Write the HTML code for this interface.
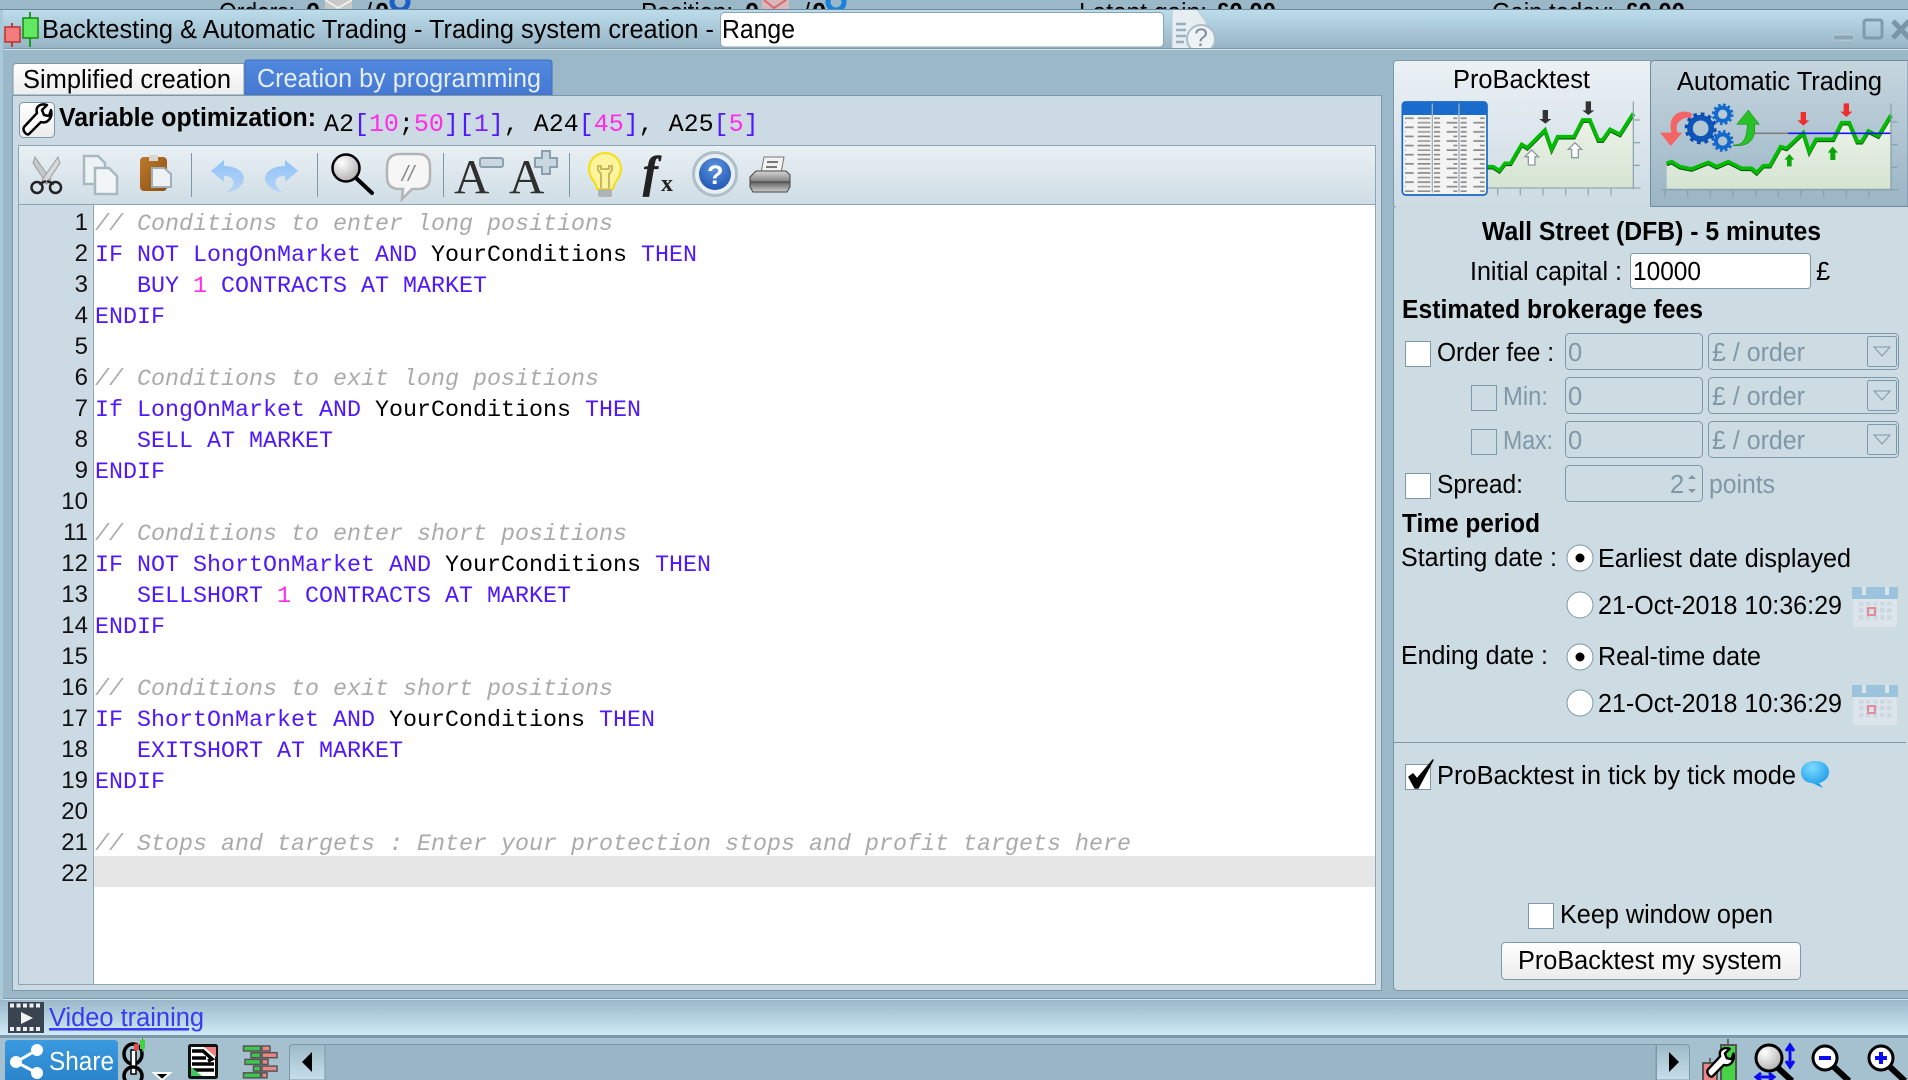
<!DOCTYPE html>
<html lang="en"><head><meta charset="utf-8"><title>Backtesting &amp; Automatic Trading</title>
<style>
html,body{margin:0;padding:0;background:#9ab8c8;width:1908px;height:1080px;overflow:hidden}
svg{display:block}
text{font-family:"Liberation Sans",sans-serif;font-size:25.5px;fill:#000;white-space:pre;transform:translateY(1px)}
.b{font-weight:bold}
.d{fill:#7f98a6}
.m{font-family:"Liberation Mono",monospace;font-size:23.33px}
.c{fill:#aaaaaa;font-style:italic}
.k{fill:#4f18ff}
.n{fill:#ff2be8}
.ln{font-size:24px;text-anchor:end;fill:#111}
</style></head><body>
<svg xmlns="http://www.w3.org/2000/svg" width="1908" height="1080" viewBox="0 0 1908 1080">
<defs>
<linearGradient id="gt" x1="0" y1="0" x2="0" y2="1"><stop offset="0" stop-color="#bcdcec"/><stop offset="1" stop-color="#98b4c4"/></linearGradient>
<linearGradient id="gw" x1="0" y1="0" x2="0" y2="1"><stop offset="0" stop-color="#fff"/><stop offset="1" stop-color="#ececec"/></linearGradient>
<linearGradient id="gb" x1="0" y1="0" x2="0" y2="1"><stop offset="0" stop-color="#5089de"/><stop offset="1" stop-color="#4678d2"/></linearGradient>
<linearGradient id="gtb" x1="0" y1="0" x2="0" y2="1"><stop offset="0" stop-color="#e9f0f4"/><stop offset="1" stop-color="#cfdde5"/></linearGradient>
<linearGradient id="gpb" x1="0" y1="0" x2="0" y2="1"><stop offset="0" stop-color="#ebf1f5"/><stop offset="1" stop-color="#cddbe3"/></linearGradient>
<linearGradient id="gat" x1="0" y1="0" x2="0" y2="1"><stop offset="0" stop-color="#c6d6df"/><stop offset="1" stop-color="#9ab5c5"/></linearGradient>
<linearGradient id="gv" x1="0" y1="0" x2="0" y2="1"><stop offset="0" stop-color="#9ab8c8"/><stop offset="1" stop-color="#cfeaf7"/></linearGradient>
<linearGradient id="gsb" x1="0" y1="0" x2="0" y2="1"><stop offset="0" stop-color="#3a9ae0"/><stop offset="1" stop-color="#2b84cc"/></linearGradient>
<linearGradient id="gsc" x1="0" y1="0" x2="0" y2="1"><stop offset="0" stop-color="#9db9c8"/><stop offset="1" stop-color="#c7dfec"/></linearGradient>
<linearGradient id="gch" x1="0" y1="0" x2="0" y2="1"><stop offset="0" stop-color="#eef4ea"/><stop offset="1" stop-color="#d5e4d2"/></linearGradient>
<linearGradient id="gbr" x1="0" y1="0" x2="1" y2="1"><stop offset="0" stop-color="#bd7a2c"/><stop offset="1" stop-color="#8b4e12"/></linearGradient>
<linearGradient id="gar" x1="0" y1="0" x2="0" y2="1"><stop offset="0" stop-color="#8fc2fa"/><stop offset="1" stop-color="#b6d4f4"/></linearGradient>
<linearGradient id="gpr" x1="0" y1="0" x2="0" y2="1"><stop offset="0" stop-color="#d8d8d8"/><stop offset="0.45" stop-color="#8a8a8a"/><stop offset="0.55" stop-color="#666"/><stop offset="1" stop-color="#cfcfcf"/></linearGradient>
<radialGradient id="gmg" cx="0.35" cy="0.3" r="0.8"><stop offset="0" stop-color="#fff"/><stop offset="1" stop-color="#aaa"/></radialGradient>
<radialGradient id="gbl" cx="0.5" cy="0.3" r="0.8"><stop offset="0" stop-color="#5b94dc"/><stop offset="1" stop-color="#1c4fb0"/></radialGradient>
<radialGradient id="gbub" cx="0.4" cy="0.25" r="0.8"><stop offset="0" stop-color="#7fdcff"/><stop offset="1" stop-color="#0e94e6"/></radialGradient>
<pattern id="rows" x="0" y="352" width="80" height="27.4" patternUnits="userSpaceOnUse"><rect x="3" y="0" width="68" height="5" fill="#888"/><rect x="3" y="13.7" width="44" height="5" fill="#999"/></pattern>
<pattern id="rowsr" x="0" y="352" width="80" height="27.4" patternUnits="userSpaceOnUse"><rect x="30" y="0" width="40" height="5" fill="#888"/><rect x="10" y="13.7" width="60" height="5" fill="#888"/></pattern>
<pattern id="cal" x="0" y="0" width="7" height="7" patternUnits="userSpaceOnUse"><rect x="0" y="0" width="4.4" height="4.4" fill="#cbd8e0"/></pattern>
<clipPath id="tb"><rect x="1160" y="10" width="80" height="38"/></clipPath>
</defs>

<rect width="1908" height="1080" fill="#9ab8c8"/>

<!-- clipped top status text -->
<text x="219" y="20" textLength="76" lengthAdjust="spacingAndGlyphs">Orders:</text>
<text class="b" x="306" y="20">0</text>
<rect x="325" y="0" width="27" height="10" fill="#c8c8c8"/><path d="M325 0l13 8 14-8" stroke="#eee" stroke-width="2" fill="none"/>
<text x="365" y="20">/</text><text class="b" x="375" y="20">0</text>
<circle cx="400" cy="2" r="8" fill="none" stroke="#1a60c8" stroke-width="5"/>
<text x="641" y="20" textLength="92" lengthAdjust="spacingAndGlyphs">Position:</text>
<text class="b" x="745" y="20">0</text>
<rect x="762" y="0" width="27" height="10" fill="#d8b8bc"/><path d="M764 0l10 8 12-8" stroke="#d86a6a" stroke-width="2" fill="none"/>
<text x="803" y="20">/</text><text class="b" x="812" y="20">0</text>
<circle cx="836" cy="2" r="8" fill="none" stroke="#1a80e0" stroke-width="5"/>
<text x="1079" y="20" textLength="128" lengthAdjust="spacingAndGlyphs">Latent gain:</text>
<text class="b" x="1216" y="20" textLength="60" lengthAdjust="spacingAndGlyphs">£0.00</text>
<text x="1492" y="20" textLength="122" lengthAdjust="spacingAndGlyphs">Gain today:</text>
<text class="b" x="1625" y="20" textLength="60" lengthAdjust="spacingAndGlyphs">£0.00</text>

<!-- window -->
<rect x="0" y="9" width="1908" height="1071" fill="#9ab8c8"/>
<rect x="0" y="9" width="1908" height="1" fill="#6d8a9a"/>
<rect x="0" y="10" width="1908" height="38" fill="url(#gt)"/>
<rect x="4" y="48" width="1904" height="1" fill="#7d98a8"/>
<rect x="4" y="49" width="1904" height="1" fill="#d5e5ee"/>
<rect x="0" y="10" width="3" height="990" fill="#a9c8d8"/>

<!-- candle logo -->
<path d="M12 23V47" stroke="#c83838" stroke-width="2"/><rect x="5" y="27" width="15" height="15" fill="#f47c7c" stroke="#b83232" stroke-width="1.500"/>
<path d="M30 12V47" stroke="#18a018" stroke-width="2"/><rect x="23" y="18" width="15" height="20" fill="#62e862" stroke="#128a12" stroke-width="1.500"/>
<text x="42" y="37" textLength="672" lengthAdjust="spacingAndGlyphs">Backtesting &amp; Automatic Trading - Trading system creation -</text>
<rect x="720.500" y="12.500" width="443" height="34.500" rx="4" fill="#fff" stroke="#8aa4b2"/>
<text x="722" y="37" textLength="73" lengthAdjust="spacingAndGlyphs">Range</text>
<!-- help doc -->
<g clip-path="url(#tb)">
<path d="M1172 8h24l10 14v30h-34z" fill="#e6eef2" stroke="#b8cad4"/>
<path d="M1176 24h10M1176 30h10M1176 36h10M1176 42h8" stroke="#9ab0bc" stroke-width="2.500"/>
<circle cx="1201" cy="39" r="14" fill="#eef3f6" stroke="#aabdc8" stroke-width="2"/>
<text x="1194" y="45" style="font-size:25px;fill:#7f8f98">?</text>
</g>
<!-- window controls -->
<rect x="1833" y="35" width="21" height="5" rx="2" fill="#8ba5b4" stroke="#c7d9e3" stroke-width=".7"/>
<rect x="1864" y="20" width="18" height="18" rx="2" fill="none" stroke="#7f9bab" stroke-width="3"/>
<path d="M1893 21l16 17M1909 21l-16 17" stroke="#7a96a6" stroke-width="5"/>

<!-- left tabs -->
<path d="M13 95V67q0-3.500 3.500-3.500H244V95z" fill="url(#gw)" stroke="#7d98a8"/>
<path d="M245 95V63q0-3 3-3H549q3 0 3 3V95z" fill="url(#gb)" stroke="#3f6fbe"/>
<text x="23" y="87" textLength="208" lengthAdjust="spacingAndGlyphs">Simplified creation</text>
<text x="257" y="86" textLength="284" lengthAdjust="spacingAndGlyphs" style="fill:#e4eefa">Creation by programming</text>

<!-- left panel -->
<rect x="12.500" y="95.500" width="1369" height="895" fill="#ccdbe3" stroke="#7d98a8"/>
<rect x="19.500" y="102.500" width="35" height="35" rx="4" fill="url(#gw)" stroke="#7d98a8"/>
<path id="wr" d="M24 127L37 113C35 106 41 103 47 105L42 110 44 115 49 116 51 110C53 118 47 124 41 122L29 134C27 136 22 131 24 127z" fill="#fff" stroke="#000" stroke-width="2.500" stroke-linejoin="round"/>
<text class="b" x="59" y="125" textLength="257" lengthAdjust="spacingAndGlyphs">Variable optimization:</text>
<text class="m" x="324" y="130" style="font-size:24.98px">A2<tspan class="k">[</tspan><tspan class="n">10</tspan>;<tspan class="n">50</tspan><tspan class="k">][</tspan><tspan class="n" style="fill:#8020ff">1</tspan><tspan class="k">]</tspan>, A24<tspan class="k">[</tspan><tspan class="n">45</tspan><tspan class="k">]</tspan>, A25<tspan class="k">[</tspan><tspan class="n">5</tspan><tspan class="k">]</tspan></text>

<!-- editor frame -->
<rect x="18.500" y="145.500" width="1357" height="839" fill="#fff" stroke="#8ba5b4"/>
<rect x="19" y="146" width="1356" height="58" fill="url(#gtb)"/>
<rect x="19" y="204" width="1356" height="1" fill="#8ba5b4"/>
<rect x="19" y="205" width="75" height="779" fill="#ccdbe3"/>
<rect x="93" y="205" width="1" height="779" fill="#8ba5b4"/>
<rect x="94" y="856" width="1281" height="31" fill="#e6e6e6"/>

<!-- toolbar icons -->
<g>
<path d="M35 157L51 180 47 184 33 163z" fill="#c6c9cb" stroke="#9a9da0"/>
<path d="M58 157L42 180 46 184 60 163z" fill="#d6d8da" stroke="#9a9da0"/>
<path d="M46 181L39 184M47 181L54 184" stroke="#222" stroke-width="2.500"/>
<circle cx="37" cy="187.500" r="5.500" fill="none" stroke="#222" stroke-width="2.500"/><circle cx="55.500" cy="187.500" r="5.500" fill="none" stroke="#222" stroke-width="2.500"/>
<path d="M84 156h14l7 7v21H84z" fill="#edf2f5" stroke="#a8b8c0" stroke-width="2.500"/>
<path d="M95 168h14l8 8v18H95z" fill="#f2f5f7" stroke="#a8b8c0" stroke-width="2.500"/>
<rect x="140" y="157" width="27" height="34" rx="4" fill="url(#gbr)"/><rect x="149" y="155" width="9" height="6" fill="#d8d8d0"/>
<path d="M152 168h12l7 6v13h-19z" fill="#eef2f4" stroke="#a0b0b8" stroke-width="2"/>
<rect x="191" y="153" width="1" height="44" fill="#7d98a8"/>
<path d="M211 171L224 160V166C240 166 248 176 242 184 238 190 232 192 226 192 234 188 236 180 230 177 228 176 226 176 224 176V182z" fill="url(#gar)"/>
<path d="M298 171L285 160V166C269 166 261 176 267 184 271 190 277 192 283 192 275 188 273 180 279 177 281 176 283 176 285 176V182z" fill="url(#gar)"/>
<rect x="317" y="153" width="1" height="44" fill="#7d98a8"/>
<circle cx="346" cy="168" r="13.500" fill="url(#gmg)" stroke="#000" stroke-width="2.500"/>
<path d="M356 178l16 15" stroke="#000" stroke-width="4" stroke-linecap="round"/>
<path d="M400 154h18q12 0 12 13v10q0 12-12 12h-6l-10 10 1-10h-3q-13 0-13-12v-10q0-13 13-13z" fill="#f6f6f6" stroke="#b4b4b4" stroke-width="2.500"/>
<text x="402" y="180" style="font-size:22px;font-style:italic;fill:#8b8b8b">//</text>
<rect x="443" y="153" width="1" height="44" fill="#7d98a8"/>
<text x="454" y="192" style="font-family:'Liberation Serif',serif;font-size:49px;fill:#2f2f2f">A</text>
<rect x="480" y="158" width="23" height="9" rx="2" fill="#c9d8e0" stroke="#8aa0ac" stroke-width="2"/>
<text x="509" y="192" style="font-family:'Liberation Serif',serif;font-size:49px;fill:#2f2f2f">A</text>
<path d="M542 151h8v7h7v9h-7v7h-8v-7h-7v-9h7z" fill="#c9d8e0" stroke="#8aa0ac" stroke-width="2"/>
<rect x="569" y="153" width="1" height="44" fill="#7d98a8"/>
<path d="M605 153c10 0 16 8 16 16 0 9-7 12-8 20h-16c-1-8-8-11-8-20 0-8 6-16 16-16z" fill="#fff49c" stroke="#f6dc10" stroke-width="2"/>
<path d="M601 188v-14l-3-4v-4h3v3h8v-3h3v4l-3 4v14" fill="none" stroke="#c8b860" stroke-width="2"/>
<rect x="598" y="189" width="14" height="8" rx="2" fill="#b0b4b6"/>
<text x="643" y="186" style="font-family:'Liberation Serif',serif;font-size:44px;font-style:italic;font-weight:bold;fill:#222;stroke:#222;stroke-width:.8px">f</text>
<text x="661" y="190" style="font-family:'Liberation Serif',serif;font-size:24px;font-weight:bold;fill:#222">x</text>
<circle cx="715" cy="174" r="21.500" fill="#e8eff3" stroke="#aebfc9" stroke-width="3"/>
<circle cx="715" cy="174" r="16" fill="url(#gbl)"/>
<text x="707" y="183" class="b" style="font-size:27px;fill:#fff">?</text>
<path d="M764 157h20l-3 16h-20z" fill="#f2f2f2" stroke="#777"/>
<path d="M767 162h11M766 167h11" stroke="#777" stroke-width="2"/>
<path d="M756 171h30l4 4v12l-3 5h-34l-3-5v-10z" fill="url(#gpr)" stroke="#444"/>
<path d="M750 182h40" stroke="#444"/>
</g>

<!-- line numbers -->
<g>
<text class="ln" x="88" y="229">1</text><text class="ln" x="88" y="260">2</text><text class="ln" x="88" y="291">3</text><text class="ln" x="88" y="322">4</text><text class="ln" x="88" y="353">5</text><text class="ln" x="88" y="384">6</text><text class="ln" x="88" y="415">7</text><text class="ln" x="88" y="446">8</text><text class="ln" x="88" y="477">9</text><text class="ln" x="88" y="508">10</text><text class="ln" x="88" y="539">11</text><text class="ln" x="88" y="570">12</text><text class="ln" x="88" y="601">13</text><text class="ln" x="88" y="632">14</text><text class="ln" x="88" y="663">15</text><text class="ln" x="88" y="694">16</text><text class="ln" x="88" y="725">17</text><text class="ln" x="88" y="756">18</text><text class="ln" x="88" y="787">19</text><text class="ln" x="88" y="818">20</text><text class="ln" x="88" y="849">21</text><text class="ln" x="88" y="880">22</text>
</g>

<!-- code -->
<text class="m c" x="95" y="229">// Conditions to enter long positions</text>
<text class="m k" x="95" y="260">IF NOT LongOnMarket AND <tspan style="fill:#000">YourConditions </tspan>THEN</text>
<text class="m k" x="95" y="291">   BUY <tspan class="n">1</tspan> CONTRACTS AT MARKET</text>
<text class="m k" x="95" y="322">ENDIF</text>
<text class="m c" x="95" y="384">// Conditions to exit long positions</text>
<text class="m k" x="95" y="415">If LongOnMarket AND <tspan style="fill:#000">YourConditions </tspan>THEN</text>
<text class="m k" x="95" y="446">   SELL AT MARKET</text>
<text class="m k" x="95" y="477">ENDIF</text>
<text class="m c" x="95" y="539">// Conditions to enter short positions</text>
<text class="m k" x="95" y="570">IF NOT ShortOnMarket AND <tspan style="fill:#000">YourConditions </tspan>THEN</text>
<text class="m k" x="95" y="601">   SELLSHORT <tspan class="n">1</tspan> CONTRACTS AT MARKET</text>
<text class="m k" x="95" y="632">ENDIF</text>
<text class="m c" x="95" y="694">// Conditions to exit short positions</text>
<text class="m k" x="95" y="725">IF ShortOnMarket AND <tspan style="fill:#000">YourConditions </tspan>THEN</text>
<text class="m k" x="95" y="756">   EXITSHORT AT MARKET</text>
<text class="m k" x="95" y="787">ENDIF</text>
<text class="m c" x="95" y="849">// Stops and targets : Enter your protection stops and profit targets here</text>

<!-- right panel -->
<rect x="1393.500" y="205.500" width="520" height="785" rx="4" fill="#cddbe3" stroke="#7d98a8"/>
<path d="M1393.500 206V64q0-3.500 3.500-3.500H1650V206z" fill="url(#gpb)"/>
<path d="M1393.500 206V64q0-3.500 3.500-3.500H1650" fill="none" stroke="#7d98a8"/>
<path d="M1650.500 206.500V64q0-3.500 3.500-3.500H1908V206.500z" fill="url(#gat)" stroke="#6f8c9c"/>
<text x="1453" y="87" textLength="137" lengthAdjust="spacingAndGlyphs">ProBacktest</text>
<text x="1677" y="89" textLength="205" lengthAdjust="spacingAndGlyphs">Automatic Trading</text>

<g transform="translate(1390,0) scale(.33333)">
<!-- chart 1 -->
<path d="M292 500L310 500 328 512 345 490 362 490 395 433 412 443 465 390 485 448 503 410 552 410 578 360 600 360 625 420 638 420 660 388 690 403 730 340V562H292z" fill="url(#gch)"/>
<path d="M292 503L310 503 328 515 345 493 362 493 395 436 412 446 465 393 485 451 503 413 552 413 578 363 600 363 625 423 638 423 660 391 690 406 730 343" fill="none" stroke="#0b4a0b" stroke-width="11"/>
<path d="M292 500L310 500 328 512 345 490 362 490 395 433 412 443 465 390 485 448 503 410 552 410 578 360 600 360 625 420 638 420 660 388 690 403 730 340" fill="none" stroke="#0b0" stroke-width="11"/>
<path d="M730 304V568M292 564H752M730 360h20M730 428h20M730 496h20M323 564v22M391 564v22M459 564v22M527 564v22M595 564v22M663 564v22" stroke="#94a8b3" stroke-width="4" fill="none"/>
<path d="M458 330h16v27h10l-18 14-18-14h10z" fill="#333"/>
<path d="M587 304h16v27h10l-18 14-18-14h10z" fill="#333"/>
<path d="M425 450l20 20h-10v25h-20v-25h-10z" fill="#fff" stroke="#8c9aa2" stroke-width="4"/>
<path d="M555 428l20 20h-10v25h-20v-25h-10z" fill="#fff" stroke="#8c9aa2" stroke-width="4"/>
<rect x="37" y="306" width="254" height="279" rx="10" fill="#f4f4f4" stroke="#1666c8" stroke-width="5"/>
<path d="M37 345V316q0-10 10-10H281q10 0 10 10V345z" fill="#1a6ccc"/>
<rect x="45" y="352" width="76" height="224" fill="url(#rows)"/>
<rect x="132" y="352" width="70" height="224" fill="url(#rowsr)"/>
<rect x="212" y="352" width="72" height="224" fill="url(#rowsr)"/>
<path d="M127 310V578M207 310V578" stroke="#9fb0ba" stroke-width="4"/>
<!-- chart 2 -->
<path d="M830 490L845 485 870 500 905 507 955 487 980 500 1015 485 1055 505 1085 505 1100 518 1120 497 1140 497 1172 440 1190 445 1240 398 1258 455 1278 418 1330 418 1355 368 1378 368 1402 425 1415 425 1435 393 1465 408 1503 345V566H830z" fill="url(#gch)"/>
<path d="M1085 400H1195" stroke="#808080" stroke-width="5"/>
<path d="M830 493L845 488 870 503 905 510 955 490 980 503 1015 488 1055 508 1085 508 1100 521 1120 500 1140 500 1172 443 1190 448 1240 401 1258 458 1278 421 1330 421 1355 371 1378 371 1402 428 1415 428 1435 396 1465 411 1503 348" fill="none" stroke="#0b4a0b" stroke-width="11"/>
<path d="M830 490L845 485 870 500 905 507 955 487 980 500 1015 485 1055 505 1085 505 1100 518 1120 497 1140 497 1172 440 1190 445 1240 398 1258 455 1278 418 1330 418 1355 368 1378 368 1402 425 1415 425 1435 393 1465 408 1503 345" fill="none" stroke="#0b0" stroke-width="11"/>
<path d="M1195 400H1503" stroke="#1414ee" stroke-width="5"/>
<path d="M1503 310V572M815 569H1525M1503 366h20M1503 434h20M1503 502h20M825 569v22M893 569v22M961 569v22M1029 569v22M1097 569v22M1165 569v22M1233 569v22M1301 569v22M1369 569v22M1437 569v22" stroke="#8ba1ae" stroke-width="4" fill="none"/>
<path d="M1232 336h16v25h10l-18 16-18-16h10z" fill="#f02c2c"/>
<path d="M1361 310h16v25h10l-18 16-18-16h10z" fill="#f02c2c"/>
<path d="M1198 462l15 17h-8v20h-14v-20h-8z" fill="#0aa60a"/>
<path d="M1328 440l16 18h-8v22h-15v-22h-8z" fill="#0aa60a"/>
<!-- red arrow -->
<path d="M905 340C865 322 830 355 845 398h-35l32 40 35-40h-14c-12-30 12-46 42-46z" fill="#f46464"/>
<!-- green arrow -->
<path d="M1030 435c28 0 40-15 42-62h-32l35-43 33 43h-14c4 52-20 66-64 64z" fill="#27c127" stroke="#0a800a" stroke-width="1.500"/>
<!-- gears -->
<circle cx="932" cy="385" r="32" fill="none" stroke="#0d55b8" stroke-width="17"/>
<circle cx="932" cy="385" r="43" fill="none" stroke="#0d4ab0" stroke-width="10" stroke-dasharray="11 11.500"/>
<circle cx="998" cy="343" r="20" fill="none" stroke="#1268cc" stroke-width="12"/>
<circle cx="998" cy="343" r="29" fill="none" stroke="#1268cc" stroke-width="7" stroke-dasharray="8 7.200"/>
<circle cx="998" cy="423" r="20" fill="none" stroke="#1268cc" stroke-width="12"/>
<circle cx="998" cy="423" r="29" fill="none" stroke="#1268cc" stroke-width="7" stroke-dasharray="8 7.200"/>
</g>

<text class="b" x="1482" y="239" textLength="339" lengthAdjust="spacingAndGlyphs">Wall Street (DFB) - 5 minutes</text>
<text x="1470" y="279" textLength="152" lengthAdjust="spacingAndGlyphs">Initial capital :</text>
<rect x="1630.500" y="253.500" width="180" height="35" rx="3" fill="#fff" stroke="#7d98a8"/>
<text x="1633" y="279" textLength="68" lengthAdjust="spacingAndGlyphs">10000</text>
<text x="1816" y="279">£</text>
<text class="b" x="1402" y="317" textLength="301" lengthAdjust="spacingAndGlyphs">Estimated brokerage fees</text>

<!-- order fee rows -->
<rect x="1405.500" y="341.500" width="25" height="25" fill="#fff" stroke="#7d98a8"/>
<text x="1437" y="360" textLength="117" lengthAdjust="spacingAndGlyphs">Order fee :</text>
<g fill="none" stroke="#7d98a8">
<rect x="1565.500" y="333.500" width="137" height="36" rx="4"/><rect x="1708.500" y="333.500" width="190" height="36" rx="4"/><rect x="1867.500" y="336.500" width="29" height="30" rx="2"/>
<rect x="1471.500" y="385.500" width="25" height="25"/>
<rect x="1565.500" y="377.500" width="137" height="36" rx="4"/><rect x="1708.500" y="377.500" width="190" height="36" rx="4"/><rect x="1867.500" y="380.500" width="29" height="30" rx="2"/>
<rect x="1471.500" y="429.500" width="25" height="25"/>
<rect x="1565.500" y="421.500" width="137" height="36" rx="4"/><rect x="1708.500" y="421.500" width="190" height="36" rx="4"/><rect x="1867.500" y="424.500" width="29" height="30" rx="2"/>
<rect x="1565.500" y="465.500" width="137" height="36" rx="4"/>
<path d="M1874 347h16l-8 9zM1874 391h16l-8 9zM1874 435h16l-8 9z"/>
</g>
<text class="d" x="1568" y="360">0</text><text class="d" x="1712" y="360" textLength="93" lengthAdjust="spacingAndGlyphs">£ / order</text>
<text class="d" x="1503" y="404" textLength="45" lengthAdjust="spacingAndGlyphs">Min:</text>
<text class="d" x="1568" y="404">0</text><text class="d" x="1712" y="404" textLength="93" lengthAdjust="spacingAndGlyphs">£ / order</text>
<text class="d" x="1503" y="448" textLength="50" lengthAdjust="spacingAndGlyphs">Max:</text>
<text class="d" x="1568" y="448">0</text><text class="d" x="1712" y="448" textLength="93" lengthAdjust="spacingAndGlyphs">£ / order</text>
<rect x="1405.500" y="473.500" width="25" height="25" fill="#fff" stroke="#7d98a8"/>
<text x="1437" y="492" textLength="86" lengthAdjust="spacingAndGlyphs">Spread:</text>
<text class="d" x="1670" y="492">2</text>
<path d="M1688 479l4-4 4 4zM1688 489l4 4 4-4z" fill="#7f98a6"/>
<text class="d" x="1709" y="492" textLength="66" lengthAdjust="spacingAndGlyphs">points</text>
<text class="b" x="1402" y="531" textLength="138" lengthAdjust="spacingAndGlyphs">Time period</text>

<!-- dates -->
<text x="1401" y="565" textLength="156" lengthAdjust="spacingAndGlyphs">Starting date :</text>
<circle cx="1580" cy="558" r="13" fill="#fff" stroke="#7d98a8"/><circle cx="1580" cy="558" r="4.500" fill="#000"/>
<text x="1598" y="566" textLength="253" lengthAdjust="spacingAndGlyphs">Earliest date displayed</text>
<circle cx="1580" cy="605" r="13" fill="#fff" stroke="#7d98a8"/>
<text x="1598" y="613" textLength="244" lengthAdjust="spacingAndGlyphs">21-Oct-2018 10:36:29</text>
<g transform="translate(1852,587)">
<rect x="1" y="3" width="44" height="37" rx="2" fill="#dbe5eb" stroke="#d6e0e6"/>
<rect x="0" y="0" width="46" height="12" fill="#9cc3dc"/><path d="M12 0v8M35 0v8" stroke="#d8e4ea" stroke-width="4"/>
<rect x="6" y="15" width="36" height="20" fill="url(#cal)"/>
<rect x="16" y="21" width="7" height="7" fill="none" stroke="#e48a9a" stroke-width="2"/>
</g>
<text x="1401" y="663" textLength="147" lengthAdjust="spacingAndGlyphs">Ending date :</text>
<circle cx="1580" cy="657" r="13" fill="#fff" stroke="#7d98a8"/><circle cx="1580" cy="657" r="4.500" fill="#000"/>
<text x="1598" y="664" textLength="163" lengthAdjust="spacingAndGlyphs">Real-time date</text>
<circle cx="1580" cy="703" r="13" fill="#fff" stroke="#7d98a8"/>
<text x="1598" y="711" textLength="244" lengthAdjust="spacingAndGlyphs">21-Oct-2018 10:36:29</text>
<g transform="translate(1852,685)">
<rect x="1" y="3" width="44" height="37" rx="2" fill="#dbe5eb" stroke="#d6e0e6"/>
<rect x="0" y="0" width="46" height="12" fill="#9cc3dc"/><path d="M12 0v8M35 0v8" stroke="#d8e4ea" stroke-width="4"/>
<rect x="6" y="15" width="36" height="20" fill="url(#cal)"/>
<rect x="16" y="21" width="7" height="7" fill="none" stroke="#e48a9a" stroke-width="2"/>
</g>
<rect x="1393" y="742" width="513" height="1" fill="#7d98a8"/>

<rect x="1405.500" y="764.500" width="25" height="25" fill="#fff" stroke="#7d98a8"/>
<path d="M1409 777l4-3 4 5L1433 760 1418 788h-3z" fill="#000" stroke="#000" stroke-width="1.500" stroke-linejoin="round"/>
<text x="1437" y="783" textLength="359" lengthAdjust="spacingAndGlyphs">ProBacktest in tick by tick mode</text>
<path d="M1815 761c9 0 14 5 14 11s-5 10-10 11l4 5-11-5c-7 0-11-5-11-11s5-11 14-11z" fill="url(#gbub)"/>

<rect x="1528.500" y="903.500" width="25" height="25" fill="#fff" stroke="#7d98a8"/>
<text x="1560" y="922" textLength="213" lengthAdjust="spacingAndGlyphs">Keep window open</text>
<rect x="1501.500" y="942.500" width="299" height="37" rx="4" fill="url(#gw)" stroke="#7d98a8"/>
<text x="1518" y="968" textLength="264" lengthAdjust="spacingAndGlyphs">ProBacktest my system</text>

<!-- video bar -->
<rect x="3" y="998" width="1905" height="1" fill="#7d98a8"/>
<rect x="3" y="999" width="1905" height="1" fill="#d5e5ee"/>
<rect x="0" y="1000" width="1908" height="35" fill="url(#gv)"/>
<rect x="0" y="1035" width="1908" height="3" fill="#7d98a8"/>
<rect x="0" y="1038" width="1908" height="42" fill="#a5c0cf"/>
<rect x="8" y="1002" width="36" height="31" fill="#3a4450"/>
<path d="M10 1005.500h32M10 1029h32" stroke="#f0f0f0" stroke-width="4" stroke-dasharray="4 2.500"/>
<path d="M21 1012l12 6-12 6z" fill="#f2f2f2"/>
<text x="49" y="1025" textLength="155" lengthAdjust="spacingAndGlyphs" style="fill:#3a3af0;text-decoration:underline">Video training</text>

<!-- bottom bar -->
<rect x="325" y="1044.500" width="1331" height="36" fill="#9ab6c6" stroke="#7d98a8"/>
<path d="M5 1080V1044q0-4 4-4H114q4 0 4 4V1080z" fill="url(#gsb)"/>
<path d="M37 1050L16 1062 37 1073" fill="none" stroke="#fff" stroke-width="3"/>
<circle cx="37" cy="1050" r="6" fill="#fff"/><circle cx="16" cy="1062" r="6" fill="#fff"/><circle cx="37" cy="1073" r="6" fill="#fff"/>
<text x="49" y="1069" textLength="65" lengthAdjust="spacingAndGlyphs" style="fill:#fff">Share</text>
<!-- chain -->
<ellipse cx="133" cy="1054" rx="9" ry="10" fill="none" stroke="#000" stroke-width="3.500"/>
<rect x="131" y="1050" width="5" height="24" fill="#fff" stroke="#000" stroke-width="1.500"/>
<ellipse cx="133" cy="1076" rx="9" ry="9" fill="none" stroke="#000" stroke-width="3.500"/>
<path d="M136 1042v10" stroke="#c33" stroke-width="1"/><rect x="134" y="1044" width="5" height="6" fill="#e84848"/>
<path d="M142.500 1038v14" stroke="#1a1" stroke-width="1"/><rect x="140" y="1040" width="5" height="9" fill="#3fd43f"/>
<path d="M154 1073h16l-8 7z" fill="#000" stroke="#fff" stroke-width="2"/>
<!-- book icon -->
<rect x="189.500" y="1045.500" width="27" height="32" rx="1" fill="#fff" stroke="#111" stroke-width="3"/>
<path d="M192 1051h11l9 8-4 2M192 1058h14M192 1064h22M192 1070h22" stroke="#000" stroke-width="3.500" fill="none"/>
<path d="M204 1047h12v10z" fill="#ef8080"/><path d="M191 1076v-9l11 9z" fill="#3fc85f"/>
<!-- market depth -->
<g stroke="#555" stroke-width="1.500">
<g fill="#3fc64f"><rect x="243.500" y="1046" width="17" height="5"/><rect x="251" y="1052.700" width="9.500" height="5"/><rect x="245" y="1059.400" width="15.500" height="5"/><rect x="253.500" y="1066.100" width="7" height="5"/><rect x="243.500" y="1072.800" width="17" height="5"/></g>
<g fill="#ef8585"><rect x="262" y="1046" width="8" height="5"/><rect x="262" y="1052.700" width="15" height="5"/><rect x="262" y="1059.400" width="6" height="5"/><rect x="262" y="1066.100" width="15" height="5"/><rect x="262" y="1072.800" width="5" height="5"/></g>
</g>
<!-- scroll buttons -->
<path d="M325 1044.500H293q-3.500 0-3.500 3.500V1080H325z" fill="url(#gsc)" stroke="#7d98a8"/>
<path d="M312 1052v20l-10-10z" fill="#000"/>
<path d="M1656.500 1044.500H1686q3.500 0 3.500 3.500V1080H1656.500z" fill="url(#gsc)" stroke="#7d98a8"/>
<path d="M1669 1052v20l10-10z" fill="#000"/>
<!-- tools -->
<path d="M1710 1058v4" stroke="#666" stroke-width="2"/><rect x="1703" y="1063" width="14" height="18" fill="#f08484" stroke="#555" stroke-width="2"/>
<path d="M1728 1039v5" stroke="#666" stroke-width="2"/><rect x="1721" y="1045" width="15" height="36" fill="#46d446" stroke="#555" stroke-width="2"/>
<path transform="translate(1685,949) scale(.95)" d="M24 127L37 113C35 106 41 103 47 105L42 110 44 115 49 116 51 110C53 118 47 124 41 122L29 134C27 136 22 131 24 127z" fill="#fff" stroke="#000" stroke-width="2.500" stroke-linejoin="round"/>
<circle cx="1769" cy="1058" r="13" fill="url(#gmg)" stroke="#000" stroke-width="3"/>
<path d="M1778 1068l14 13" stroke="#000" stroke-width="6"/>
<path d="M1790 1046v20M1786 1051l4-6 4 6M1786 1061l4 6 4-6" stroke="#0b0bf0" stroke-width="3" fill="none"/>
<path d="M1756 1077h18M1761 1073l-5 4 5 4M1769 1073l5 4-5 4" stroke="#0b0bf0" stroke-width="3" fill="none"/>
<circle cx="1825" cy="1058" r="12" fill="#fff" stroke="#000" stroke-width="3"/>
<path d="M1834 1067l15 14" stroke="#000" stroke-width="6"/>
<path d="M1819 1058h12" stroke="#0b0bf0" stroke-width="4"/>
<circle cx="1881" cy="1058" r="12" fill="#fff" stroke="#000" stroke-width="3"/>
<path d="M1890 1067l15 14" stroke="#000" stroke-width="6"/>
<path d="M1875 1058h12M1881 1052v12" stroke="#0b0bf0" stroke-width="4"/>
</svg>
</body></html>
